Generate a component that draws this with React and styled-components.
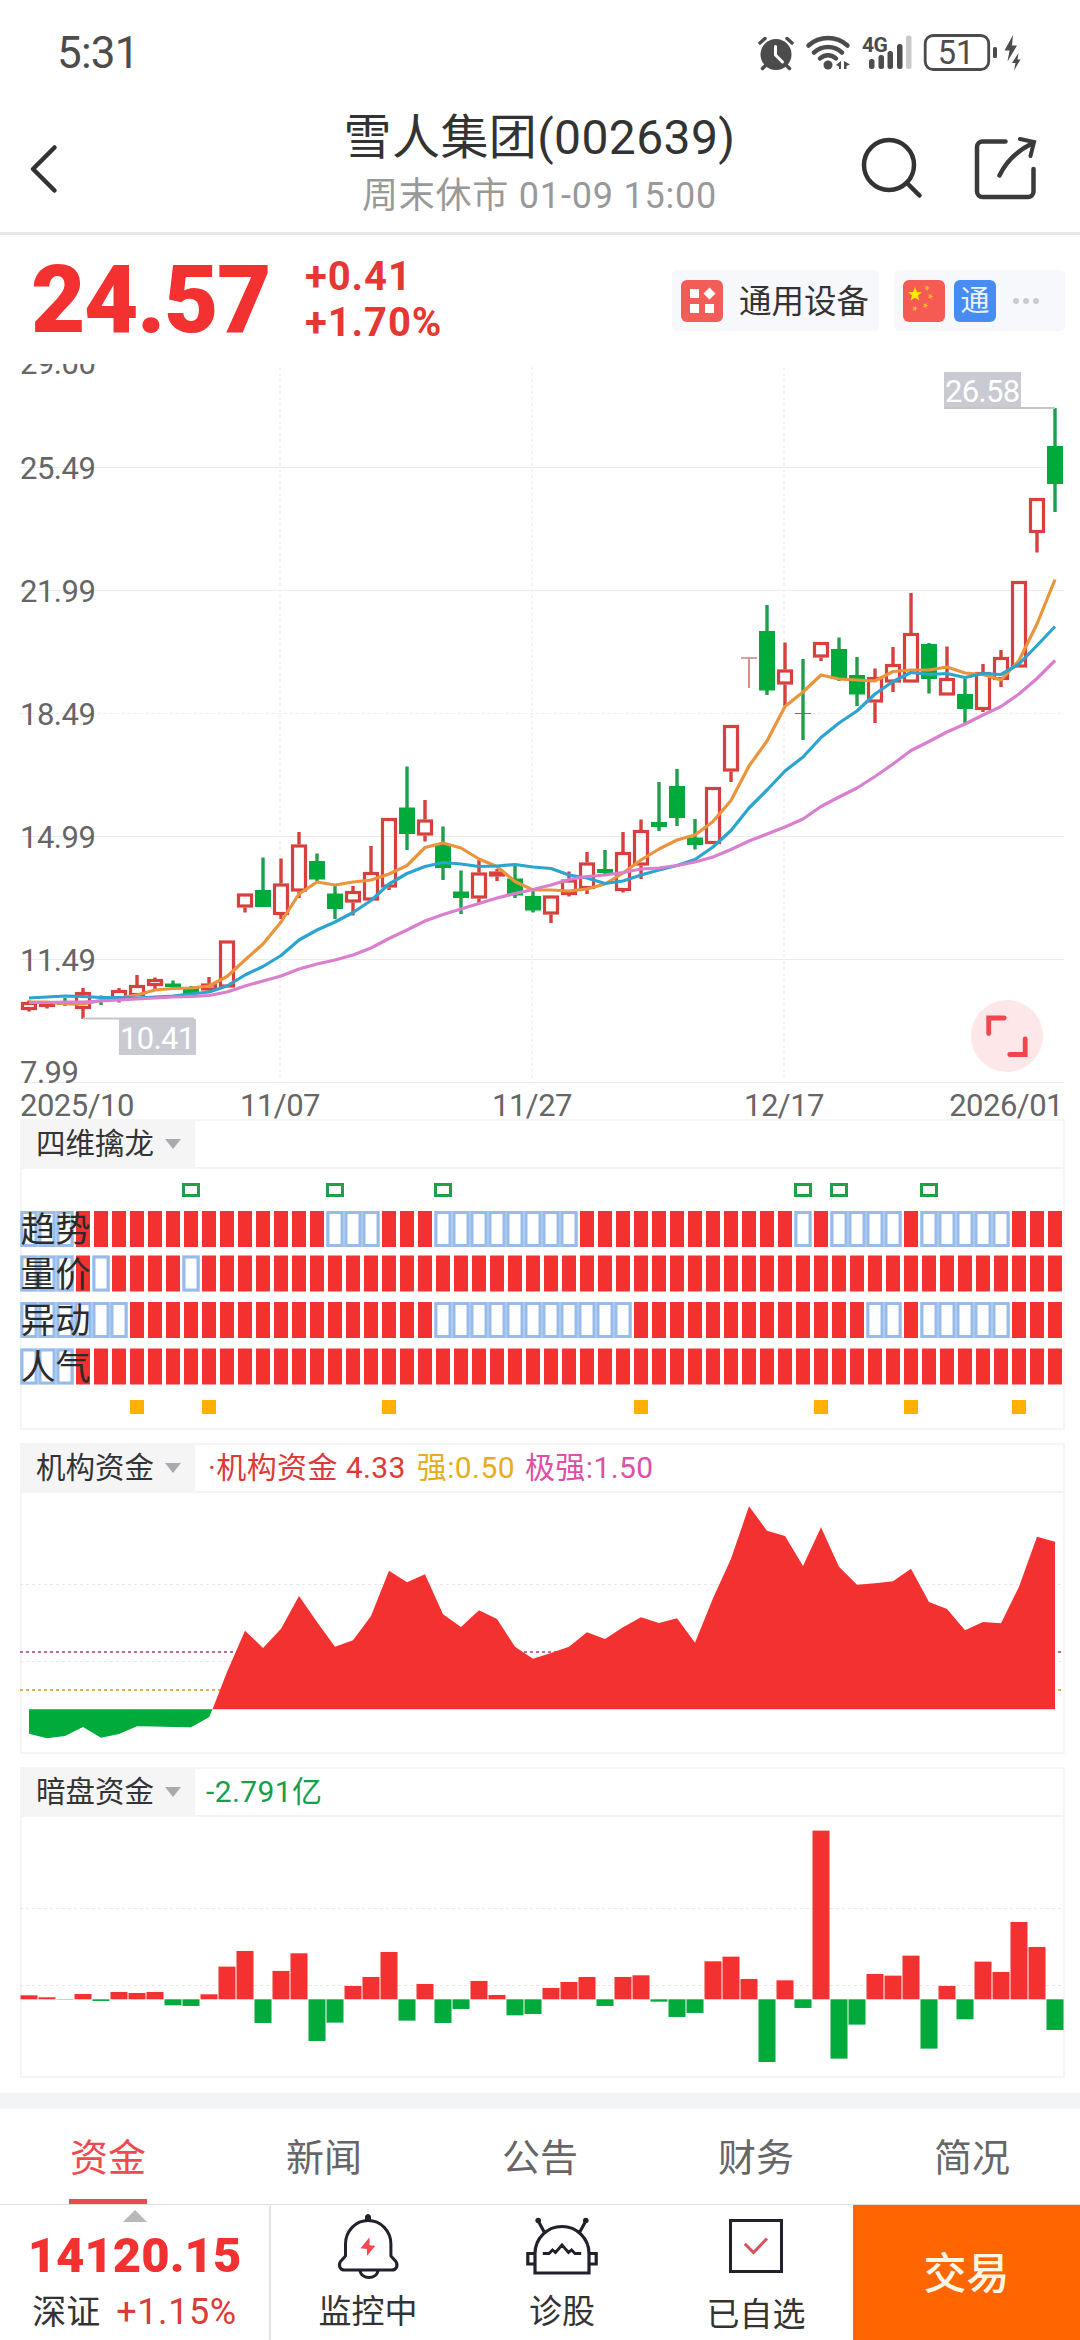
import React from 'react'
import styled, { createGlobalStyle } from 'styled-components'

const RED = '#f33130'
const GREEN = '#00aa3b'
const LINE_RED = '#d8403d'
const LINE_GREEN = '#1f9f4a'

const GlobalStyle = createGlobalStyle`
  * {
    box-sizing: border-box;
  }
  body {
    margin: 0;
    background: #ffffff;
    font-family: Roboto, "Noto Sans CJK SC", sans-serif;
    color: #333333;
  }
  svg {
    display: block;
    flex: none;
  }
`;

const Screen = styled.div`
  width: 1080px;
  height: 2340px;
  overflow: hidden;
  display: flex;
  flex-direction: column;
  background: #ffffff;
`;

const StatusBar = styled.div`
  height: 100px;
  display: flex;
  justify-content: space-between;
  align-items: center;
  padding: 5px 58px 0 57px;
  color: #4c4c4c;
`;

const Clock = styled.div`
  font-size: 44px;
  line-height: 50px;
  letter-spacing: -0.8px;
`;

const StatusIcons = styled.div`
  display: flex;
  align-items: center;
`;

const Header = styled.header`
  height: 135px;
  display: flex;
  align-items: center;
  justify-content: space-between;
  padding: 0 42px 0 24px;
  border-bottom: 3px solid #e6e6e6;
`;

const HeaderSide = styled.div`
  width: 150px;
  display: flex;
  justify-content: ${props => props.$end ? 'flex-end' : 'flex-start'};
  gap: 51px;
  padding-top: 6px;
`;

const TitleBox = styled.div`
  display: flex;
  flex-direction: column;
  align-items: center;
  padding-left: 17px;
  padding-bottom: 3px;
`;

const Title = styled.div`
  font-size: 48px;
  line-height: 62px;
  letter-spacing: 0.4px;
`;

const SubTitle = styled.div`
  font-size: 36px;
  line-height: 54px;
  letter-spacing: 0.8px;
  color: #999999;
`;

const Quote = styled.section`
  height: 129px;
  display: flex;
  align-items: center;
  padding: 0 15px 0 31px;
`;

const Price = styled.div`
  width: 274px;
  font-size: 94px;
  line-height: 110px;
  font-weight: 900;
  letter-spacing: -1.5px;
  padding-top: 1px;
  color: ${RED};
`;

const Change = styled.div`
  flex: 1;
  font-size: 40px;
  line-height: 46px;
  font-weight: 700;
  letter-spacing: 0.9px;
  color: #e53734;
`;

const Chip = styled.div`
  height: 61px;
  display: flex;
  align-items: center;
  gap: 9px;
  padding: 0 9px;
  border-radius: 5px;
  background: #f7f8fb;
  margin: 2px 0 0 15px;
  width: ${props => props.$width}px;
`;

const ChipText = styled.span`
  font-size: 32.5px;
  line-height: 44px;
  padding-left: 7px;
  padding-top: 2px;
  white-space: nowrap;
`;

const Badge = styled.div`
  width: 42px;
  height: 42px;
  flex: none;
  display: flex;
  align-items: center;
  justify-content: center;
  border-radius: 6px;
  font-size: 29px;
  line-height: 40px;
  color: #e8f2ff;
  background: ${props => props.$color};
`;

const Dots = styled.div`
  display: flex;
  gap: 4px;
  padding-left: 8px;

  i {
    width: 6px;
    height: 6px;
    border-radius: 50%;
    background: #cbcbcd;
  }
`;

const AxisText = styled.text`
  font-size: 31px;
  letter-spacing: ${props => props.$light ? '-0.7px' : '-0.5px'};
  fill: ${props => props.$light ? '#ffffff' : '#666666'};
`;

const Panel = styled.section`
  width: 1045px;
  height: ${props => props.$height}px;
  margin: 0 0 ${props => props.$gap}px 20px;
  border: 2px solid #f4f5f6;
  display: flex;
  flex-direction: column;

  svg {
    margin-left: -2px;
  }
`;

const PanelHead = styled.div`
  height: 48px;
  flex: none;
  display: flex;
  align-items: center;
  border-bottom: 2px solid #f1f3f4;
  font-size: 30px;
  line-height: 44px;
  letter-spacing: 0.4px;
`;

const Picker = styled.div`
  width: 175px;
  height: 49px;
  margin: -2px 0 -2px -2px;
  display: flex;
  align-items: center;
  gap: 11px;
  padding-left: 16px;
  background: #f5f5f5;
  font-size: 29.5px;
  letter-spacing: 0;
  white-space: nowrap;

  &::after {
    content: '';
    border: 8px solid transparent;
    border-top: 10px solid #a9aab0;
    border-bottom: 0;
  }
`;

const Legend = styled.span`
  margin-left: ${props => props.$left}px;
  color: ${props => props.$color};
`;

const RowLabel = styled.text`
  font-size: 35px;
  fill: #2b2b2b;
`;

const Tabs = styled.nav`
  height: 112px;
  display: flex;
  border-top: 16px solid #f3f4f6;
  border-bottom: 1px solid #dfdfdf;
`;

const Tab = styled.div`
  flex: 1;
  display: flex;
  flex-direction: column;
  align-items: center;
  padding-top: 8px;
  font-size: 38px;
  line-height: 82px;
  color: ${props => props.$active ? '#ee4a50' : '#666666'};

  &::after {
    content: '';
    width: 78px;
    height: 5px;
    background: ${props => props.$active ? '#e84c51' : 'transparent'};
  }
`;

const BottomBar = styled.footer`
  height: 135px;
  display: flex;
`;

const IndexCell = styled.div`
  width: 271px;
  display: flex;
  flex-direction: column;
  align-items: center;
  border-right: 2px solid #e4e4e4;

  &::before {
    content: '';
    margin-top: 5px;
    border: 12px solid transparent;
    border-top: 0;
    border-bottom-color: #b8b8b8;
  }
`;

const IndexValue = styled.div`
  margin-top: 6px;
  font-size: 49px;
  line-height: 56px;
  font-weight: 900;
  color: ${RED};
`;

const IndexRow = styled.div`
  display: flex;
  align-items: center;
  gap: 16px;
  margin-top: 4px;
  font-size: 34px;
  line-height: 48px;

  span {
    font-size: 36px;
    letter-spacing: 0.6px;
    color: #d93c3a;
  }
`;

const Action = styled.div`
  width: 194px;
  display: flex;
  flex-direction: column;
  align-items: center;
  padding-top: 8px;
  font-size: 33px;
  line-height: 48px;

  svg {
    margin-bottom: ${props => props.$space}px;
  }
`;

const Trade = styled.div`
  flex: 1;
  display: flex;
  align-items: center;
  justify-content: center;
  padding-bottom: 5px;
  font-size: 43px;
  font-weight: 500;
  color: #fff7e6;
  background: #ff6600;
`;

// [direction, body top, body bottom, high, low]
const candles = [
  ['u', 1002, 1010, 1000.5, 1011.5], ['u', 1002, 1007, 1001, 1008.5], ['d', 1004, 1005, 998, 1006],
  ['u', 992, 1009, 988, 1019], ['d', 997, 998, 995.5, 1005], ['u', 990, 1000, 988, 1002.5],
  ['u', 985, 996, 975, 996], ['u', 979, 986, 977.5, 989], ['d', 983.5, 987, 980.5, 988],
  ['d', 987.5, 994, 986, 994], ['u', 983.5, 990.5, 977, 991.5], ['u', 940.5, 987.5, 940.5, 987.5],
  ['u', 893.5, 907.5, 893.5, 912.5], ['d', 890, 907, 857.5, 907], ['u', 883.5, 915, 858.5, 919],
  ['u', 844.5, 891.5, 832, 898], ['d', 861, 879.5, 853.5, 881.5], ['d', 893.5, 909, 885.5, 919],
  ['u', 891, 902.5, 886, 915.5], ['u', 872, 900.5, 846, 900.5], ['u', 818, 887.5, 818, 890],
  ['d', 807.5, 834, 766.5, 850], ['u', 819.5, 835.5, 800, 841.5], ['d', 845, 868, 826.5, 880],
  ['d', 891.5, 898, 870.5, 914], ['u', 872.5, 898.5, 860, 903], ['u', 871.5, 876.5, 869, 881],
  ['d', 878.5, 895.5, 866, 898], ['d', 896, 910.5, 890, 912.5], ['u', 895.5, 914.5, 895.5, 923],
  ['u', 879.5, 895, 871.5, 896.5], ['u', 862.5, 889, 852, 894], ['d', 869, 873, 850, 874.5],
  ['u', 852, 891, 832, 892.5], ['u', 830, 865.5, 819.5, 879], ['d', 822, 827, 782, 831],
  ['d', 786, 818, 769, 826], ['d', 837.5, 845, 819, 849.5], ['u', 787, 844, 787, 844],
  ['u', 725, 771.5, 725, 782], ['t', 658, 659, 658, 688], ['d', 631, 690.5, 605, 695],
  ['u', 669.5, 684.5, 642.5, 706], ['d', 713, 714, 659, 740], ['u', 642, 657.5, 642, 661],
  ['d', 649, 679, 637.5, 681], ['d', 675, 694.5, 657, 706], ['u', 677, 702.5, 668.5, 723],
  ['u', 664, 682.5, 647, 692], ['u', 633, 682.5, 593, 682.5], ['d', 644, 679, 643, 693.5],
  ['u', 678, 695.5, 646.5, 695.5], ['d', 694, 709, 679, 723], ['u', 672, 710, 664, 712],
  ['u', 657, 680, 650, 687], ['u', 581, 667.5, 581, 667.5], ['u', 498, 533, 498, 552.5],
  ['d', 446, 484, 408, 512],
]

const averages = [
  {
    color: '#ea943c',
    points: [1002, 1002, 1004, 1004, 1000.5, 998, 995, 990, 988.5, 988, 986, 976.5, 960, 944, 922, 894, 882, 885, 882, 880, 874, 865.5, 847.5, 843, 848, 859, 866.5, 881.5, 890, 890, 891, 889, 884, 873, 860, 849, 840, 835, 821.5, 800.5, 766, 741, 706.5, 692, 675, 679, 680, 681, 671.5, 670, 670, 667, 673, 674.5, 680, 660.5, 624, 579.5],
  },
  {
    color: '#2ba4cf',
    points: [998, 997, 996, 996.5, 997.5, 997.5, 998, 997, 996, 994, 992, 986, 975, 966.5, 955.5, 940, 930, 922, 912.5, 900.5, 884, 873.5, 866.5, 862.5, 864, 866.5, 866, 864.5, 867, 868.5, 875, 878, 883.5, 881, 875, 870, 865.5, 859.5, 847, 830.5, 808, 790, 771, 757, 737.5, 723, 711, 694, 681.5, 672.5, 674.5, 673.5, 677.5, 673.5, 674.5, 664, 645.5, 626.5],
  },
  {
    color: '#da7fd0',
    points: [1002.5, 1002.5, 1002, 1002, 1001, 1000, 999, 998, 997, 996.5, 995.5, 992, 986, 981, 976, 969, 964, 960, 955, 948, 938.5, 930, 921, 914.5, 909, 903.5, 898, 893.5, 889.5, 885, 879.5, 876.5, 875, 872.5, 869, 868, 865.5, 862, 857, 849.5, 841, 834, 827, 819, 806.5, 797, 788, 776.5, 764, 750.5, 741.5, 732, 724, 715, 706.5, 694, 678.5, 660.5],
  },
]

const signalRows = [
  { label: '趋势', y: 1211, off: [0, 1, 2, 17, 18, 19, 23, 24, 25, 26, 27, 28, 29, 30, 43, 45, 46, 47, 48, 50, 51, 52, 53, 54] },
  { label: '量价', y: 1255.5, off: [0, 1, 2, 4, 9] },
  { label: '异动', y: 1302, off: [0, 1, 2, 3, 4, 5, 23, 24, 25, 26, 27, 28, 29, 30, 31, 32, 33, 47, 48, 50, 51, 52, 53, 54] },
  { label: '人气', y: 1348.5, off: [0, 1, 2] },
]
const sellMarks = [9, 17, 23, 43, 45, 50]
const buyMarks = [6, 10, 20, 34, 44, 49, 55]

const fundDown = [1733.7, 1738.3, 1736, 1727, 1737.7, 1734, 1726.3, 1726.5, 1727, 1727.3, 1717.3]
const fundUp = [1672, 1630.7, 1648, 1628.7, 1596, 1622, 1646.7, 1640.3, 1616, 1570.7, 1582.3, 1574.3, 1614.3, 1627, 1610.3, 1619, 1646.7, 1658.7, 1653, 1646.7, 1632.3, 1639, 1627.3, 1617.3, 1623, 1618.3, 1642.7, 1598.3, 1558.7, 1506.3, 1530.7, 1536, 1566, 1527.3, 1566.7, 1584.7, 1583.3, 1581.3, 1568.7, 1602, 1609, 1630.3, 1622, 1623.3, 1586.7, 1536.7, 1541.7]

const flows = [12, 6, -1, 16, -5, 22, 19, 22, -18, -20, 15, 98, 145, -71, 85, 138, -125, -70, 40, 67, 142, -64, 46, -71, -29, 55, 13, -48, -44, 34, 52, 67, -20, 67, 72, -7, -53, -41, 114, 128, 61, -188, 57, -26, 506, -178, -76, 76, 71, 131, -148, 40, -60, 113, 82, 232, 157, -92]

// centre of the day column
const cx = i => 29 + i * 18

const toPoints = (list, from = 0) => list.map((y, i) => `${cx(i + from)},${y}`).join(' ')

function Candle({ data, i }) {
  const [kind, top, bottom, high, low] = data
  const x = cx(i)
  if (kind === 't') {
    return (
      <g fill="#e08a88">
        <rect x={x - 8} y={top - 0.5} width="16" height="1" fill="#a84846" />
        <rect x={x - 1} y={high} width="2" height={low - high} />
      </g>
    )
  }
  if (kind === 'd') {
    return (
      <g>
        <rect x={x - 1.7} y={high} width="3.4" height={low - high} fill={LINE_GREEN} />
        <rect x={x - 8} y={top} width="16" height={bottom - top} fill={GREEN} />
      </g>
    )
  }
  return (
    <g>
      <rect x={x - 1.7} y={high} width="3.4" height={top - high} fill={LINE_RED} />
      <rect x={x - 1.7} y={bottom} width="3.4" height={low - bottom} fill={LINE_RED} />
      <rect x={x - 6.5} y={top + 1.5} width="13" height={bottom - top - 3} fill="none" stroke={LINE_RED} strokeWidth="3.2" />
    </g>
  )
}

function PriceChart() {
  return (
    <svg width="1080" height="755" viewBox="0 364 1080 755">
      <g stroke="#ebebeb" strokeWidth="1">
        {[467.5, 590.5, 836.5, 959.5, 1082.5].map(y => <line key={y} x1="20" x2="1064" y1={y} y2={y} />)}
        <line x1="20" x2="1064" y1="713.5" y2="713.5" strokeDasharray="3 3" />
      </g>
      <g stroke="#f4f4f5" strokeWidth="2" strokeDasharray="3 3">
        {[280, 532, 784].map(x => <line key={x} x1={x} x2={x} y1="367" y2="1082" />)}
      </g>
      {candles.map((c, i) => <Candle key={i} data={c} i={i} />)}
      {averages.map(a => (
        <polyline key={a.color} points={toPoints(a.points)} fill="none" stroke={a.color} strokeWidth="3.2" strokeLinejoin="round" />
      ))}
      <rect x="944" y="372" width="77" height="36" fill="#cacad3" />
      <line x1="944" x2="1055" y1="408" y2="408" stroke="#c6c6c9" strokeWidth="2" />
      <AxisText $light x="945" y="402">26.58</AxisText>
      <rect x="119" y="1019" width="77" height="36" fill="#cacad3" />
      <line x1="83" x2="194" y1="1018.5" y2="1018.5" stroke="#c6c6c9" strokeWidth="2" />
      <AxisText $light x="120" y="1049">10.41</AxisText>
      {['29.00', '25.49', '21.99', '18.49', '14.99', '11.49'].map((t, i) => (
        <AxisText key={t} x="20" y={i === 0 ? 374 : 356 + i * 123}>{t}</AxisText>
      ))}
      <AxisText x="20" y="1083">7.99</AxisText>
      <AxisText x="20" y="1115.5">2025/10</AxisText>
      <AxisText x="280" y="1115.5" textAnchor="middle">11/07</AxisText>
      <AxisText x="532" y="1115.5" textAnchor="middle">11/27</AxisText>
      <AxisText x="784" y="1115.5" textAnchor="middle">12/17</AxisText>
      <AxisText x="1063" y="1115.5" textAnchor="end">2026/01</AxisText>
      <circle cx="1007" cy="1036" r="36" fill="#fde7e9" />
      <path d="M988.7 1033.500V1018h15.500M1025.200 1039v15.500h-15.500" fill="none" stroke="#f0474e" strokeWidth="4.800" strokeLinecap="round" />
    </svg>
  )
}

function SignalChart() {
  return (
    <svg width="1045" height="259" viewBox="20 1169 1045 259">
      <g stroke="#ededed" strokeDasharray="3 3">
        <line x1="20" x2="1064" y1="1260.5" y2="1260.5" />
        <line x1="20" x2="1064" y1="1337.500" y2="1337.500" />
      </g>
      {sellMarks.map(i => (
        <rect key={i} x={cx(i) - 7.5} y="1184.5" width="15" height="11" fill="#fff" stroke="#1f9f4a" strokeWidth="3" />
      ))}
      {signalRows.map(row => (
        <g key={row.label}>
          {candles.map((_, i) => row.off.includes(i) ? (
            <g key={i}>
              <rect x={cx(i) - 9} y={row.y} width="18" height="36" fill="#bcdcfa" />
              <rect x={cx(i) - 7} y={row.y + 1.5} width="14" height="33" fill="#fff" stroke="#98bbe9" strokeWidth="3" />
            </g>
          ) : (
            <rect key={i} x={cx(i) - 7} y={row.y} width="14" height="36" fill={RED} />
          ))}
          <RowLabel x="20.5" y={row.y + 31}>{row.label}</RowLabel>
        </g>
      ))}
      {buyMarks.map(i => <rect key={i} x={cx(i) - 7} y="1400" width="14" height="14" fill="#ffb000" />)}
    </svg>
  )
}

function FundChart() {
  return (
    <svg width="1045" height="259" viewBox="20 1493 1045 259">
      <g stroke="#e8e8e8" strokeDasharray="3 3">
        <line x1="20" x2="1064" y1="1584.5" y2="1584.5" />
        <line x1="20" x2="1064" y1="1661.500" y2="1661.500" />
      </g>
      <line x1="20" x2="1064" y1="1652" y2="1652" stroke="#c465a5" strokeWidth="2" strokeDasharray="3 3" />
      <line x1="20" x2="1064" y1="1690" y2="1690" stroke="#dcb443" strokeWidth="2" strokeDasharray="3 3" />
      <polygon points={`29,1709.3 ${toPoints(fundDown)} 212.5,1709.3`} fill={GREEN} />
      <polygon points={`212.5,1709.3 ${toPoints(fundUp, 11)} 1055,1709.3`} fill={RED} />
    </svg>
  )
}

function FlowChart() {
  return (
    <svg width="1045" height="259" viewBox="20 1817 1045 259">
      <g stroke="#e8e8e8" strokeDasharray="3 3">
        <line x1="20" x2="1064" y1="1908.5" y2="1908.5" />
        <line x1="20" x2="1064" y1="1985.500" y2="1985.500" />
      </g>
      {flows.map((v, i) => (
        <rect
          key={i}
          x={cx(i) - 8.5}
          y={v > 0 ? 1999.3 - v / 3 : 1999.3}
          width="17"
          height={Math.abs(v) / 3}
          fill={v > 0 ? RED : GREEN}
        />
      ))}
    </svg>
  )
}

function StatusGlyphs() {
  return (
    <svg width="264" height="40" viewBox="758 31 264 40" fill="#4c4c4c">
      {/* alarm */}
      <circle cx="776" cy="52.500" r="15.500" />
      <path d="M760 41l5-4.500M792 41l-5-4.500M766 63l-3.500 3.500M786 63l3.500 3.500" stroke="#4c4c4c" strokeWidth="3.500" strokeLinecap="round" />
      <path d="M775.500 44.500v8.500l7 7" fill="none" stroke="#fff" strokeWidth="3" strokeLinecap="round" strokeLinejoin="round" />
      {/* wifi */}
      <g fill="none" stroke="#4c4c4c" strokeWidth="4.500" strokeLinecap="round">
        <path d="M808.500 43.500c11-10 28-10 39 0M814 50.500c8-7.500 20-7.500 28 0M820 56.500c4.500-4.500 11.500-4.500 16 0" />
      </g>
      <circle cx="828" cy="63" r="4.500" />
      <path d="M841 59v8h-2v-2.500l-3-1.500zM844 59l6 3.500-3.500 1.500v3h-2.500z" />
      {/* signal */}
      <text x="862" y="50" fontSize="21" fontWeight="700" letterSpacing="-0.5">4G</text>
      {[[869, 57], [878.500, 53], [887.500, 49], [897, 42]].map(([x, y]) => (
        <rect key={x} x={x} y={y} width="5.500" height={67 - y} rx="2.500" />
      ))}
      <rect x="906" y="33.500" width="5.500" height="33.500" rx="2.500" fill="#cacaca" />
      {/* battery */}
      <rect x="925.200" y="33.500" width="63.500" height="34" rx="8" fill="none" stroke="#4c4c4c" strokeWidth="2.800" />
      <text x="956" y="62" fontSize="32.500" textAnchor="middle">51</text>
      <rect x="993" y="45" width="4" height="11" rx="1.500" />
      <path d="M1013 33l-8.500 15.500h5l-2 11 9.500-16h-5zM1018.500 51l-6.500 10h3.500l-1.500 7.500 6.500-11h-3z" />
    </svg>
  )
}

function BackIcon() {
  return (
    <svg width="40" height="52" viewBox="24 143 40 52" fill="none" stroke="#333" strokeWidth="4.500" strokeLinecap="round" strokeLinejoin="round">
      <path d="M54.500 147.500L33 169l21.500 21.500" />
    </svg>
  )
}

function SearchIcon() {
  return (
    <svg width="62" height="64" viewBox="860 138 62 64" fill="none" stroke="#333" strokeWidth="4.500" strokeLinecap="round">
      <circle cx="888" cy="166" r="25" />
      <path d="M906.500 184.500l12 12" />
    </svg>
  )
}

function ShareIcon() {
  return (
    <svg width="64" height="64" viewBox="973 138 64 64" fill="none" stroke="#3a3a3a" strokeWidth="4.500" strokeLinecap="round">
      <path d="M1004.500 142.500H981.500a5.500 5.500 0 0 0-5.500 5.500V192.500a5.500 5.500 0 0 0 5.500 5.500H1027a5.500 5.500 0 0 0 5.500-5.500V170" />
      <path d="M998.500 176.500Q1008 156 1031 144.500" />
      <path d="M1019 140l14 3-3.500 14" strokeWidth="4" />
    </svg>
  )
}

function BlocksIcon() {
  return (
    <svg width="42" height="42" viewBox="0 0 42 42" fill="#fff">
      <path d="M9 9h9v9H9zM9 24h9v9H9zM24 24h9v9h-9zM28.500 7.500l6 6-6 6-6-6z" />
    </svg>
  )
}

const star = '0,-1 0.25,-0.33 0.95,-0.31 0.4,0.13 0.59,0.81 0,0.42 -0.59,0.81 -0.4,0.13 -0.95,-0.31 -0.25,-0.33'

function FlagIcon() {
  return (
    <svg width="42" height="42" viewBox="0 0 42 42">
      <polygon points={star} transform="translate(12 14.500) scale(7.500)" fill="#ffea00" />
      {[[24, 8], [27.500, 16.500], [22.500, 25.500], [12, 28.500]].map(([x, y]) => (
        <polygon key={x} points={star} transform={`translate(${x} ${y}) rotate(20) scale(3.200)`} fill="#ffb22e" />
      ))}
    </svg>
  )
}

function BellIcon() {
  return (
    <svg width="66" height="68" viewBox="335 2214 66 68" fill="none" stroke="#20212b" strokeWidth="3" strokeLinejoin="round">
      <path d="M345.500 2257v-12a22.700 23.500 0 0 1 45.400 0v12l5 5.500c2.500 4 .5 8.500-4 8.500H344.500c-4.500 0-6.500-4.500-4-8.500z" />
      <path d="M360 2271c.5 10 17.500 10 18 0" />
      <path d="M365.500 2221v-3a2.500 2.500 0 0 1 5 0v3z" fill="#20212b" strokeWidth="1" />
      <path d="M369.500 2238.300l-9 11 6.500.7v7l8.300-10.300-5.800-.4z" fill="#ee4a50" stroke="none" />
    </svg>
  )
}

function RobotIcon() {
  return (
    <svg width="76" height="68" viewBox="524 2214 76 68" fill="none" stroke="#20212b" strokeWidth="3.200">
      <path d="M535 2274v-19.500a27 27 0 0 1 54 0V2274z" />
      <path d="M589 2254.500h7.200v10.500H589M535 2254.500h-7.200v10.500h7.200M579.500 2233.500l6-11M544.500 2233.500l-6-11" />
      <circle cx="585.800" cy="2221.500" r="2.800" fill="#20212b" stroke="none" />
      <circle cx="538.200" cy="2221.500" r="2.800" fill="#20212b" stroke="none" />
      <path d="M542.800 2254.500h6.200l3.500-3.500 3 2.500 6.500-7.500 6.500 7.500 3-2.500 3.500 3.500h6.200" strokeWidth="2.800" />
    </svg>
  )
}

function CheckIcon() {
  return (
    <svg width="58" height="68" viewBox="727 2214 58 68" fill="none">
      <rect x="730.500" y="2221.500" width="51" height="51" stroke="#20212b" strokeWidth="3" />
      <path d="M744.800 2244.700l8.700 8.800 13.500-14" stroke="#dc525a" strokeWidth="3" />
    </svg>
  )
}

const tabs = ['资金', '新闻', '公告', '财务', '简况']

export default function App() {
  return (
    <Screen>
      <GlobalStyle />
      <StatusBar>
        <Clock>5:31</Clock>
        <StatusIcons><StatusGlyphs /></StatusIcons>
      </StatusBar>
      <Header>
        <HeaderSide><BackIcon /></HeaderSide>
        <TitleBox>
          <Title>雪人集团(002639)</Title>
          <SubTitle>周末休市 01-09 15:00</SubTitle>
        </TitleBox>
        <HeaderSide $end>
          <SearchIcon />
          <ShareIcon />
        </HeaderSide>
      </Header>
      <Quote>
        <Price>24.57</Price>
        <Change>
          <div>+0.41</div>
          <div>+1.70%</div>
        </Change>
        <Chip $width={207}>
          <Badge $color="#f35d58"><BlocksIcon /></Badge>
          <ChipText>通用设备</ChipText>
        </Chip>
        <Chip $width={171}>
          <Badge $color="#f55b53"><FlagIcon /></Badge>
          <Badge $color="#468cf2">通</Badge>
          <Dots><i /><i /><i /></Dots>
        </Chip>
      </Quote>
      <PriceChart />
      <Panel $height={311} $gap={13}>
        <PanelHead><Picker>四维擒龙</Picker></PanelHead>
        <SignalChart />
      </Panel>
      <Panel $height={311} $gap={13}>
        <PanelHead>
          <Picker>机构资金</Picker>
          <Legend $left={13} $color="#dc3a36">·机构资金 4.33</Legend>
          <Legend $left={11} $color="#e8ac22">强:0.50</Legend>
          <Legend $left={10} $color="#dd50a6">极强:1.50</Legend>
        </PanelHead>
        <FundChart />
      </Panel>
      <Panel $height={311} $gap={15}>
        <PanelHead>
          <Picker>暗盘资金</Picker>
          <Legend $left={11} $color="#12a04a">-2.791亿</Legend>
        </PanelHead>
        <FlowChart />
      </Panel>
      <Tabs>
        {tabs.map((name, i) => <Tab key={name} $active={i === 0}>{name}</Tab>)}
      </Tabs>
      <BottomBar>
        <IndexCell>
          <IndexValue>14120.15</IndexValue>
          <IndexRow>深证 <span>+1.15%</span></IndexRow>
        </IndexCell>
        <Action $space={7}><BellIcon />监控中</Action>
        <Action $space={7}><RobotIcon />诊股</Action>
        <Action $space={10}><CheckIcon />已自选</Action>
        <Trade>交易</Trade>
      </BottomBar>
    </Screen>
  )
}
